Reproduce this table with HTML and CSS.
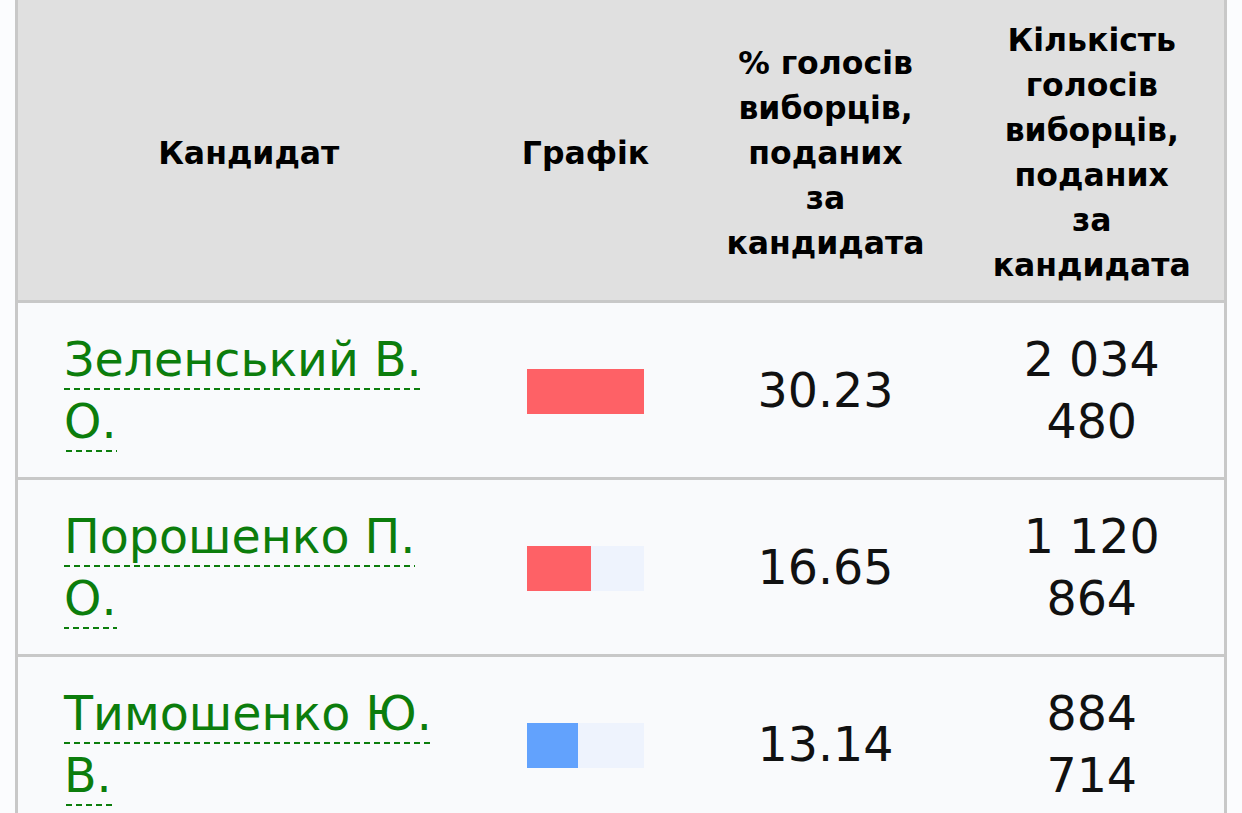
FILE: index.html
```html
<!DOCTYPE html>
<html lang="uk">
<head>
<meta charset="utf-8">
<title>Результати</title>
<link rel="stylesheet" href="styles.css">
</head>
<body>
<table class="results">
  <colgroup>
    <col class="c-name">
    <col class="c-chart">
    <col class="c-pct">
    <col class="c-votes">
  </colgroup>
  <thead>
    <tr>
      <th>Кандидат</th>
      <th>Графік</th>
      <th>% голосів виборців, поданих за кандидата</th>
      <th>Кількість голосів виборців, поданих за кандидата</th>
    </tr>
  </thead>
  <tbody>
    <tr>
      <td class="name"><a class="cand" href="#">Зеленський В. О.</a></td>
      <td class="chart"><div class="bar"><div class="fill red" style="width:100%"></div></div></td>
      <td class="num">30.23</td>
      <td class="num votes">2 034 480</td>
    </tr>
    <tr>
      <td class="name"><a class="cand" href="#">Порошенко П. О.</a></td>
      <td class="chart"><div class="bar"><div class="fill red" style="width:55.08%"></div></div></td>
      <td class="num">16.65</td>
      <td class="num votes">1 120 864</td>
    </tr>
    <tr>
      <td class="name"><a class="cand" href="#">Тимошенко Ю. В.</a></td>
      <td class="chart"><div class="bar"><div class="fill blue" style="width:43.47%"></div></div></td>
      <td class="num">13.14</td>
      <td class="num votes">884 714</td>
    </tr>
  </tbody>
</table>
</body>
</html>
```

FILE: styles.css
```css
html, body {
  margin: 0;
  padding: 0;
  background: #fbfcfe;
}

body {
  font-family: "DejaVu Sans", Verdana, sans-serif;
  color: #000;
}

.results {
  margin-left: 15px;
  width: 1212px;
  table-layout: fixed;
  border-collapse: collapse;
  border-left: 3px solid #c8c8c8;
  border-right: 3px solid #c8c8c8;
}

.c-name { width: 463px; }
.c-chart { width: 212px; }
.c-pct { width: 268px; }
.c-votes { width: 266px; }

.results th {
  background: #e0e0e0;
  font-size: 31.5px;
  line-height: 45px;
  font-weight: bold;
  text-align: center;
  vertical-align: middle;
  padding: 18px 33px 12px;
  border-bottom: 3px solid #c8c8c8;
}

.results td {
  background: #f9fafc;
  font-size: 47.5px;
  line-height: 62px;
  vertical-align: middle;
  text-align: center;
  padding: 26px 10px 24px;
  border-bottom: 3px solid #c8c8c8;
  color: #111;
}

.results td.name {
  text-align: left;
  padding-left: 46px;
  padding-right: 40px;
}

.results td.votes {
  padding-left: 40px;
  padding-right: 40px;
}

.cand {
  color: #0c7d0c;
  text-decoration: none;
  padding-bottom: 3px;
  background-image: repeating-linear-gradient(to right, #0c7d0c 0 6px, transparent 6px 10px);
  background-size: 100% 2px;
  background-position: left bottom;
  background-repeat: no-repeat;
}

.chart {
  padding: 0;
}

.bar {
  width: 117px;
  height: 45px;
  margin: 0 auto;
  background: #eef3fd;
  display: flex;
}

.fill {
  height: 100%;
}

.fill.red { background: #fe6166; }
.fill.blue { background: #62a2fd; }
```
